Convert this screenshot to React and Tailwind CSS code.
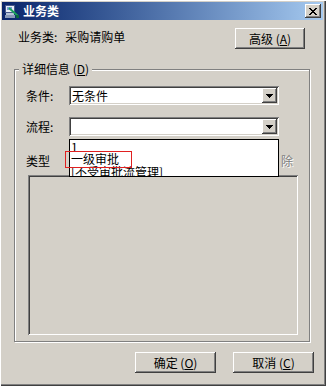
import React from "react";

const raised =
  "shadow-[inset_-1px_-1px_0_#404040,inset_1px_1px_0_#ffffff,inset_-2px_-2px_0_#808080,inset_2px_2px_0_#d4d0c8]";
const sunken =
  "shadow-[inset_1px_1px_0_#808080,inset_-1px_-1px_0_#ffffff,inset_2px_2px_0_#404040,inset_-2px_-2px_0_#d4d0c8]";

function Btn({ children, className }) {
  return (
    <div
      className={`flex items-center justify-center bg-[#d4d0c8] text-black text-[12px] leading-[12px] ${raised} ${className}`}
    >
      {children}
    </div>
  );
}

function Arrow() {
  return (
    <svg width="7" height="4" viewBox="0 0 7 4" shapeRendering="crispEdges">
      <rect x="0" y="0" width="7" height="1" fill="#000" />
      <rect x="1" y="1" width="5" height="1" fill="#000" />
      <rect x="2" y="2" width="3" height="1" fill="#000" />
      <rect x="3" y="3" width="1" height="1" fill="#000" />
    </svg>
  );
}

function Combo({ value }) {
  return (
    <div className={`w-[210px] h-[19px] bg-white flex items-center p-[2px] ${sunken}`}>
      <span className="flex-1 pl-[1px] text-[12px] leading-[12px] text-black">{value}</span>
      <div className={`w-[15px] h-[15px] flex items-center justify-center bg-[#d4d0c8] ${raised}`}>
        <Arrow />
      </div>
    </div>
  );
}

function TitleIcon() {
  return (
    <svg width="16" height="16" viewBox="0 0 16 16" shapeRendering="crispEdges">
      <rect x="1" y="2" width="9" height="7" fill="#e8eef8" stroke="#4a5a8a" strokeWidth="1" />
      <rect x="3" y="4" width="5" height="3" fill="#7aa0d8" />
      <rect x="2" y="10" width="8" height="2" fill="#b8c4d8" />
      <rect x="1" y="12" width="10" height="3" fill="#8a9ab8" />
      <path d="M5 5 L14 13" stroke="#1aa05a" strokeWidth="2" shapeRendering="auto" />
      <rect x="12" y="12" width="3" height="3" fill="#0a6a3a" />
    </svg>
  );
}

export default function App() {
  return (
    <div
      className="relative flex flex-col w-[326px] h-[386px] bg-[#d4d0c8] overflow-hidden text-black font-['Noto_Sans_CJK_SC',sans-serif] shadow-[inset_1px_1px_0_#ffffff,inset_-1px_-1px_0_#404040,inset_-2px_-2px_0_#808080]"
    >
      {/* Title bar */}
      <div className="mt-[2px] ml-[2px] w-[321px] h-[18px] flex items-center bg-gradient-to-r from-[#0a246a] to-[#a6caf0]">
        <div className="ml-[2px] w-[16px] h-[16px]">
          <TitleIcon />
        </div>
        <span className="ml-[3px] text-white font-bold text-[12px] leading-[12px]">业务类</span>
        <div className={`ml-auto mr-[2px] w-[16px] h-[14px] flex items-center justify-center bg-[#d4d0c8] ${raised}`}>
          <svg width="8" height="7" viewBox="0 0 8 7" shapeRendering="crispEdges">
            <path d="M0 0h2v1h-2z M6 0h2v1h-2z M1 1h2v1h-2z M5 1h2v1h-2z M2 2h4v1h-4z M3 3h2v1h-2z M2 4h4v1h-4z M1 5h2v1h-2z M5 5h2v1h-2z M0 6h2v1h-2z M6 6h2v1h-2z" fill="#000" />
          </svg>
        </div>
      </div>

      {/* Business type row */}
      <div className="mt-[8px] flex items-start pl-[18px] pr-[21px]">
        <div className="mt-[3px] flex text-[12px] leading-[12px]">
          <span>业务类:</span>
          <span className="ml-[8px]">采购请购单</span>
        </div>
        <Btn className="ml-auto w-[70px] h-[21px]">
          <span>
            高级 (<u className="underline-offset-1">A</u>)
          </span>
        </Btn>
      </div>

      {/* Group box */}
      <div className="relative mt-[20px] ml-[14px] w-[296px] h-[273px] border border-[#808080] shadow-[inset_1px_1px_0_#ffffff,1px_1px_0_#ffffff]">
        <span className="absolute left-[4px] top-[-7px] px-[3px] bg-[#d4d0c8] text-[12px] leading-[12px]">
          详细信息 (<u className="underline-offset-1">D</u>)
        </span>

        <div className="flex flex-col pt-[16px] pl-[11px]">
          <div className="flex items-center">
            <span className="w-[43px] text-[12px] leading-[12px]">条件:</span>
            <Combo value="无条件" />
          </div>
          <div className="mt-[12px] flex items-center">
            <span className="w-[43px] text-[12px] leading-[12px]">流程:</span>
            <Combo value="" />
          </div>
          <div className="mt-[19px] flex items-center text-[12px] leading-[12px]">
            <span>类型</span>
            <span className="ml-auto mr-[16px] text-[#808080] [text-shadow:1px_1px_0_#ffffff]">除</span>
          </div>
          <div className={`mt-[8px] ml-[2px] w-[270px] h-[160px] bg-[#d4d0c8] ${sunken}`} />
        </div>
      </div>

      {/* Bottom buttons */}
      <div className="mt-[10px] flex justify-end gap-[17px] pr-[12px]">
        <Btn className="w-[81px] h-[21px]">
          <span>
            确定 (<u className="underline-offset-1">O</u>)
          </span>
        </Btn>
        <Btn className="w-[81px] h-[21px]">
          <span>
            取消 (<u className="underline-offset-1">C</u>)
          </span>
        </Btn>
      </div>

      {/* Dropdown list overlay */}
      <div className="absolute left-[69px] top-[139px] w-[210px] h-[38px] bg-white border border-black overflow-hidden text-[12px]">
        <div className="h-[12px] leading-[13px] pl-[1px]">1</div>
        <div className="h-[13px] leading-[13px] pl-[1px]">一级审批</div>
        <div className="h-[13px] leading-[13px] pl-[1px]">[不受审批流管理]</div>
      </div>

      {/* Red annotation box */}
      <div className="absolute left-[65px] top-[151px] w-[67px] h-[17px] border border-[#e02020]" />
    </div>
  );
}
